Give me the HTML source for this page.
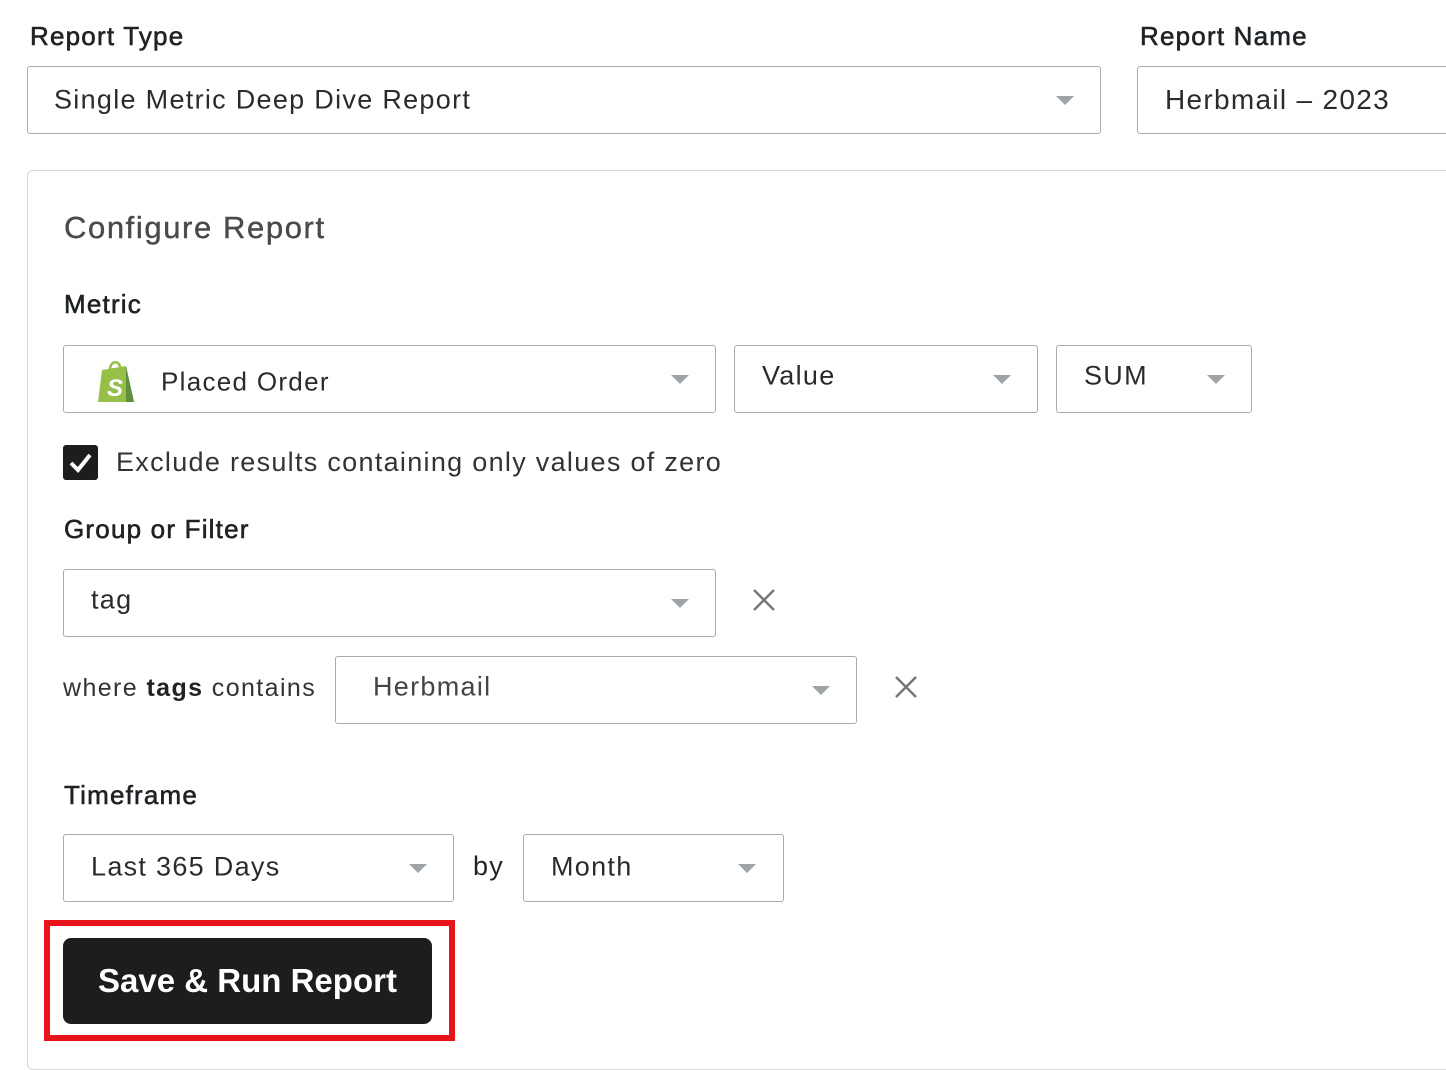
<!DOCTYPE html>
<html><head><meta charset="utf-8"><style>
*{box-sizing:border-box;margin:0;padding:0}
body{width:1446px;height:1051px;background:#fff;position:relative;overflow:hidden;font-family:"Liberation Sans",sans-serif;color:#222}
.a{position:absolute}
.lbl{position:absolute;font-size:26px;color:#1f2326;line-height:1;letter-spacing:1.2px;-webkit-text-stroke:0.6px #1f2326}
.box{position:absolute;border:1.5px solid #a9abae;border-radius:3px;background:#fff}
.box span{position:absolute;top:50%;transform:translateY(-50%);font-size:27px;color:#2b2b2b;white-space:nowrap;letter-spacing:1.3px}
.car{position:absolute;top:50%;margin-top:-4px;width:0;height:0;border-left:9px solid transparent;border-right:9px solid transparent;border-top:9px solid #9ea3a8}
.x{position:absolute;width:24px;height:24px}
</style></head><body>
<div class="lbl" style="left:30px;top:23px">Report Type</div>
<div class="lbl" style="left:1140px;top:23px">Report Name</div>
<div class="box" style="left:27px;top:66px;width:1074px;height:68px"><span style="left:26px">Single Metric Deep Dive Report</span><div class="car" style="right:26px"></div></div>
<div class="box" style="left:1137px;top:66px;width:330px;height:68px"><span style="left:27px;font-size:28px">Herbmail – 2023</span></div>
<div class="a" style="left:27px;top:170px;width:1440px;height:900px;border:1.5px solid #d6d7d9;border-radius:6px"></div>
<div class="lbl" style="left:64px;top:212px;font-size:31px;color:#4a4a4a;-webkit-text-stroke:0.4px #4a4a4a;letter-spacing:1.6px">Configure Report</div>
<div class="lbl" style="left:64px;top:291px">Metric</div>
<div class="box" style="left:63px;top:345px;width:653px;height:68px">
<svg class="a" style="left:32px;top:12px" width="42" height="46" viewBox="0 0 42 46"><path d="M6 12 L30 8 L38 44 L2 44 Z" fill="#95bf47"/><path d="M30 8 L38 44 L30 44 Z" fill="#5e8e3e"/><path d="M14 12 C14 2 24 2 24 10" stroke="#95bf47" stroke-width="2.5" fill="none"/><text x="11" y="38" font-family="Liberation Sans" font-weight="bold" font-style="italic" font-size="24" fill="#fff">S</text></svg>
<span style="left:97px;margin-top:3px;font-size:26px">Placed Order</span><div class="car" style="right:26px"></div></div>
<div class="box" style="left:734px;top:345px;width:304px;height:68px"><span style="left:27px;margin-top:-3px">Value</span><div class="car" style="right:26px"></div></div>
<div class="box" style="left:1056px;top:345px;width:196px;height:68px"><span style="left:27px;margin-top:-3px">SUM</span><div class="car" style="right:26px"></div></div>
<div class="a" style="left:63px;top:445px;width:35px;height:35px;background:#1c1d1f;border-radius:3px"><svg width="35" height="35"><path d="M8 18 L15 25 L27 10" stroke="#fff" stroke-width="4" fill="none"/></svg></div>
<div class="lbl" style="left:116px;top:449px;font-size:27px;color:#333;-webkit-text-stroke:0;letter-spacing:1.3px">Exclude results containing only values of zero</div>
<div class="lbl" style="left:64px;top:516px">Group or Filter</div>
<div class="box" style="left:63px;top:569px;width:653px;height:68px"><span style="left:27px;margin-top:-3px">tag</span><div class="car" style="right:26px"></div></div>
<svg class="x" style="left:752px;top:588px"><path d="M2 2L22 22M22 2L2 22" stroke="#777" stroke-width="2.5"/></svg>
<div class="lbl" style="left:63px;top:676px;font-size:25px;color:#333;-webkit-text-stroke:0;letter-spacing:1.4px">where <b style="color:#222">tags</b> contains</div>
<div class="box" style="left:335px;top:656px;width:522px;height:68px"><span style="left:37px;margin-top:-3px;color:#444">Herbmail</span><div class="car" style="right:26px"></div></div>
<svg class="x" style="left:894px;top:675px"><path d="M2 2L22 22M22 2L2 22" stroke="#777" stroke-width="2.5"/></svg>
<div class="lbl" style="left:64px;top:782px">Timeframe</div>
<div class="box" style="left:63px;top:834px;width:391px;height:68px"><span style="left:27px;margin-top:-1px">Last 365 Days</span><div class="car" style="right:26px"></div></div>
<div class="lbl" style="left:473px;top:853px;font-size:27px;-webkit-text-stroke:0">by</div>
<div class="box" style="left:523px;top:834px;width:261px;height:68px"><span style="left:27px;margin-top:-1px">Month</span><div class="car" style="right:27px"></div></div>
<div class="a" style="left:44px;top:920px;width:411px;height:121px;border:6px solid #e8141c"></div>
<div class="a" style="left:63px;top:938px;width:369px;height:86px;background:#1c1d1f;border-radius:8px;color:#fff;font-weight:bold;font-size:33px;text-align:center;line-height:86px">Save &amp; Run Report</div>
</body></html>
